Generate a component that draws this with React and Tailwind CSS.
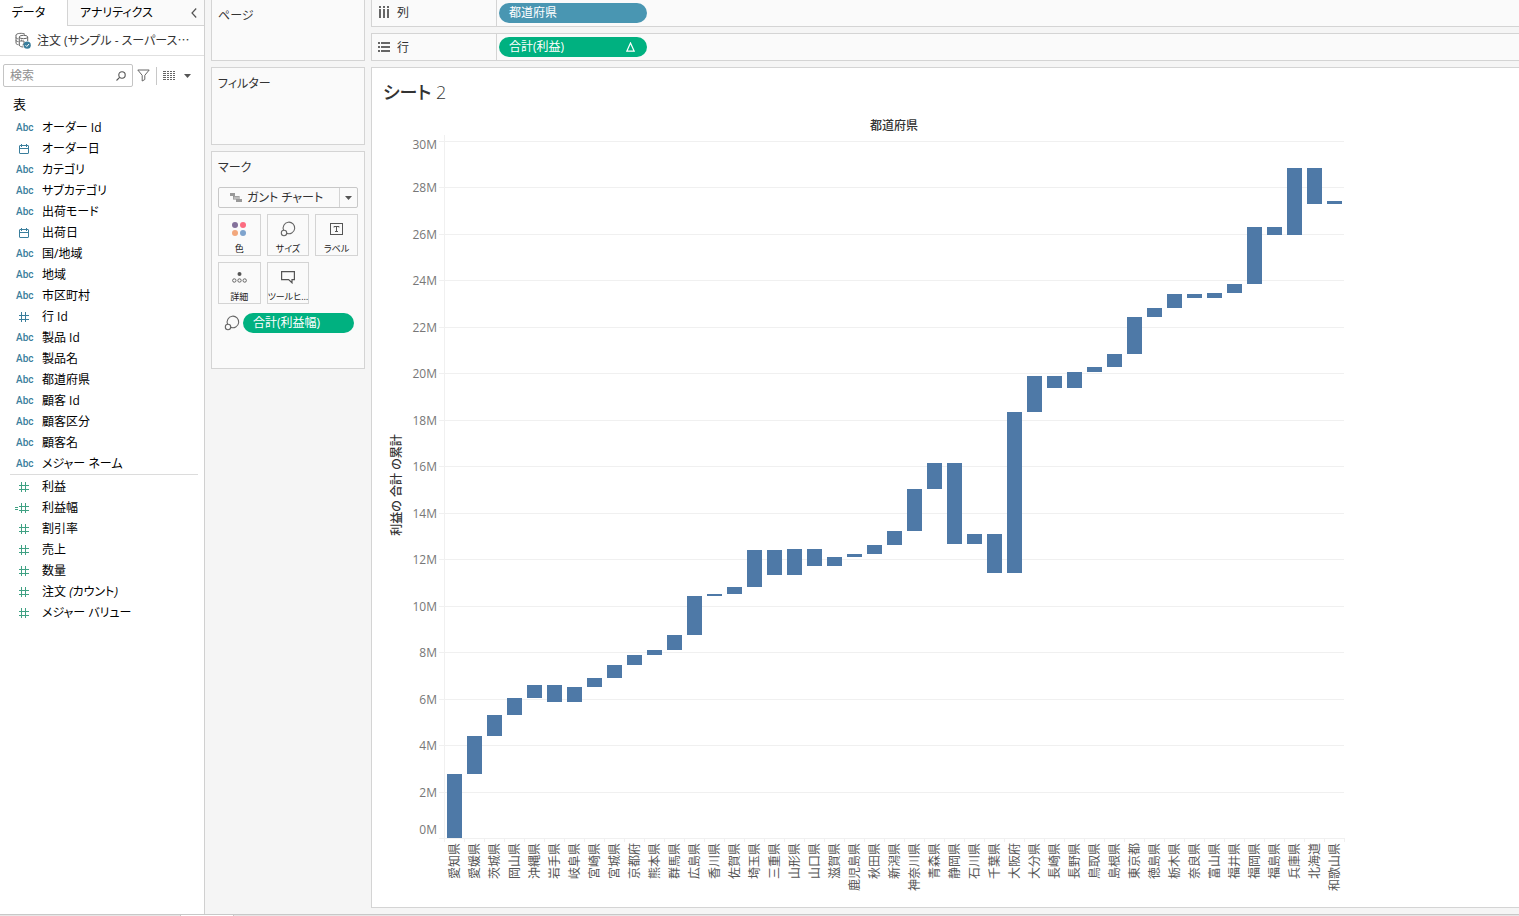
import { useState } from 'react';

const dimensions = [
  { name: 'オーダー Id', type: 'abc' },
  { name: 'オーダー日', type: 'date' },
  { name: 'カテゴリ', type: 'abc' },
  { name: 'サブカテゴリ', type: 'abc' },
  { name: '出荷モード', type: 'abc' },
  { name: '出荷日', type: 'date' },
  { name: '国/地域', type: 'abc' },
  { name: '地域', type: 'abc' },
  { name: '市区町村', type: 'abc' },
  { name: '行 Id', type: 'number' },
  { name: '製品 Id', type: 'abc' },
  { name: '製品名', type: 'abc' },
  { name: '都道府県', type: 'abc' },
  { name: '顧客 Id', type: 'abc' },
  { name: '顧客区分', type: 'abc' },
  { name: '顧客名', type: 'abc' },
  { name: 'メジャー ネーム', type: 'abc' },
];

const measures = [
  { name: '利益', type: 'number' },
  { name: '利益幅', type: 'calc' },
  { name: '割引率', type: 'number' },
  { name: '売上', type: 'number' },
  { name: '数量', type: 'number' },
  { name: '注文 (カウント)', type: 'number' },
  { name: 'メジャー バリュー', type: 'number' },
];

// running total of profit, in millions
const runningTotal = [
  ['愛知県', 2.76], ['愛媛県', 4.39], ['茨城県', 5.3], ['岡山県', 6.03], ['沖縄県', 6.59],
  ['岩手県', 5.86], ['岐阜県', 6.5], ['宮崎県', 6.89], ['宮城県', 7.45], ['京都府', 7.88],
  ['熊本県', 8.1], ['群馬県', 8.74], ['広島県', 10.42], ['香川県', 10.51], ['佐賀県', 10.81],
  ['埼玉県', 12.4], ['三重県', 11.32], ['山形県', 12.44], ['山口県', 11.71], ['滋賀県', 12.1],
  ['鹿児島県', 12.22], ['秋田県', 12.61], ['新潟県', 13.21], ['神奈川県', 15.02], ['青森県', 16.14],
  ['静岡県', 12.65], ['石川県', 13.08], ['千葉県', 11.41], ['大阪府', 18.33], ['大分県', 19.88],
  ['長崎県', 19.37], ['長野県', 20.06], ['鳥取県', 20.27], ['島根県', 20.83], ['東京都', 22.42],
  ['徳島県', 22.81], ['栃木県', 23.41], ['奈良県', 23.24], ['富山県', 23.46], ['福井県', 23.84],
  ['福岡県', 26.3], ['福島県', 25.95], ['兵庫県', 28.84], ['北海道', 27.29], ['和歌山県', 27.42],
];

const ticks = [0, 2, 4, 6, 8, 10, 12, 14, 16, 18, 20, 22, 24, 26, 28, 30];

const HashIcon = ({ color, calc }) => (
  <svg className="block shrink-0" width="18" height="12" viewBox="0 0 18 12" fill={color}>
    <path d="M6 1h1v10H6zM10 1h1v10h-1zM4 4h10v1H4zM4 8h10v1H4z" />
    {calc && <path d="M0 5h3v1H0zM0 7h3v1H0z" />}
  </svg>
);

const DateIcon = () => (
  <svg className="block shrink-0" width="18" height="12" viewBox="0 0 18 12" fill="none" stroke="#3a7e9c">
    <rect x="4.5" y="2.5" width="9" height="8" rx=".5" />
    <path d="M4.5 5.5h9M6.5 1v3M11.5 1v3" />
  </svg>
);

const SizeIcon = () => (
  <svg width="16" height="16" viewBox="0 0 16 16" fill="none" stroke="#666" strokeWidth="1.1">
    <path d="M3.6 9.3A5.8 5.8 0 1 1 6.6 12.3" />
    <circle cx="4" cy="12" r="2.7" />
  </svg>
);

const Field = ({ field, color }) => (
  <li className="flex h-[21px] items-center pl-[15px]">
    <span className="flex w-[27px] items-center">
      {field.type === 'abc' && (
        <span className="pl-px font-['Roboto','Liberation_Sans',sans-serif] text-[10px] font-medium text-[#3a7e9c]">
          Abc
        </span>
      )}
      {field.type === 'date' && <DateIcon />}
      {field.type === 'number' && <HashIcon color={color} />}
      {field.type === 'calc' && <HashIcon color={color} calc />}
    </span>
    <span className="text-black">
      {/* brackets of generated fields are slanted */}
      {field.name.split(/([()])/).map((part, i) => (
        <span key={i} className={part === '(' || part === ')' ? 'italic' : undefined}>
          {part}
        </span>
      ))}
    </span>
  </li>
);

const DataPane = () => {
  const [search, setSearch] = useState('');

  return (
    <aside className="flex w-[205px] shrink-0 flex-col border-r border-[#d0d0d0] bg-white">
      <div className="flex h-[26px] text-black">
        <button className="w-[67px] pr-[10px] text-center">データ</button>
        <div className="flex flex-1 items-center justify-between border-b border-l border-[#d4d4d4] bg-[#fafafa] pr-[7px] pl-3">
          <button>アナリティクス</button>
          <button aria-label="閉じる">
            <svg width="6" height="10" viewBox="0 0 6 10" fill="none" stroke="#555" strokeWidth="1.2">
              <path d="M5.2 0.5L1 5l4.2 4.5" />
            </svg>
          </button>
        </div>
      </div>

      {/* Data source */}
      <div className="flex h-[30px] items-center gap-[5px] border-b border-[#e0e0e0] pl-[14px] text-[#333]">
        <svg className="shrink-0" width="18" height="18" viewBox="0 0 18 18" fill="none" stroke="#666">
          <path d="M2 3.2C2 1.2 9 .6 11 2.4M2 3v8c0 1 1 1.5 2.5 1.8M2 5.5c0 .8 1 1.2 2.5 1.4M2 8.3c0 .8 1 1.2 2.5 1.4" />
          <ellipse cx="9.5" cy="5" rx="4.2" ry="1.7" />
          <path d="M5.3 5v8c0 1.3 2 1.9 4 2M13.7 5v4M6.5 9h3.5v3M6.5 9l1.5-1.2M10 12l-1.5 1" />
          <circle cx="13.2" cy="13.2" r="3.6" fill="#3a7e9c" stroke="none" />
          <path d="M11.5 13.2l1.3 1.3 2.2-2.5" stroke="#fff" />
        </svg>
        <span className="whitespace-nowrap">
          注文 (サンプル - スーパース<span className="font-['Noto_Sans_CJK_JP',sans-serif]">…</span>
        </span>
      </div>

      <div className="flex h-[39px] items-center pl-[3px]">
        <label className="flex h-[23px] w-[130px] items-center rounded-[2px] border border-[#c4c4c4] pr-[6px] pl-[6px]">
          <input
            type="text"
            aria-label="検索"
            placeholder="検索"
            className="min-w-0 flex-1 text-[12px] outline-none placeholder:text-[#8e8e8e]"
            value={search}
            onChange={(e) => setSearch(e.target.value)}
          />
          <svg width="10" height="10" viewBox="0 0 10 10" fill="none" stroke="#555" strokeWidth="1.1">
            <circle cx="6" cy="4" r="3.2" />
            <path d="M3.6 6.4L.5 9.5" />
          </svg>
        </label>
        <button className="ml-1" aria-label="フィルター">
          <svg width="13" height="13" viewBox="0 0 13 13" fill="none" stroke="#666">
            <path d="M.8 1h11.4L7.8 6.3v4.2L5.2 12V6.3z" />
          </svg>
        </button>
        <span className="ml-[6px] h-[18px] w-px bg-[#c8c8c8]" />
        <button className="ml-[6px] flex items-center gap-[9px]" aria-label="表示">
          <svg width="12" height="9" viewBox="0 0 12 9" stroke="#666" shapeRendering="crispEdges">
            <path d="M0 .5h12M0 2.5h12M0 4.5h12M0 6.5h12M0 8.5h12" strokeDasharray="3 1 2 1 2 1 2" />
          </svg>
          <svg width="7" height="4" viewBox="0 0 7 4" fill="#555">
            <path d="M0 0h7L3.5 4z" />
          </svg>
        </button>
      </div>

      <h2 className="flex h-[22px] items-start pl-[13px] text-[13px] text-black">表</h2>
      <ul>
        {dimensions.map((field) => (
          <Field key={field.name} field={field} color="#3a7e9c" />
        ))}
      </ul>
      <ul className="mr-[6px] before:mb-px before:ml-[10px] before:block before:h-px before:bg-[#dcdcdc]">
        {measures.map((field) => (
          <Field key={field.name} field={field} color="#3fa183" />
        ))}
      </ul>
    </aside>
  );
};

const MarkButton = ({ label, children }) => (
  <button className="flex h-[42px] flex-col items-center justify-between border border-[#d4d4d4] pt-[6px]">
    <span className="flex h-4 items-center">{children}</span>
    <span className="text-[9px] leading-[12px] whitespace-nowrap text-[#222]">{label}</span>
  </button>
);

const Cards = () => {
  const [mark, setMark] = useState('gantt');

  return (
    <div className="flex w-[154px] shrink-0 flex-col gap-[6px]">
      <section className="h-[61px] border border-t-0 border-[#d4d4d4] bg-[#fafafa] px-[6px] pt-[7px]">
        <h2>ページ</h2>
      </section>
      <section className="h-[78px] border border-[#d4d4d4] bg-[#fafafa] px-[6px] pt-[7px]">
        <h2>フィルター</h2>
      </section>
      <section className="h-[218px] border border-[#d4d4d4] bg-[#fafafa] px-[6px] pt-[7px]">
        <h2>マーク</h2>
        <div className="relative mt-[10px] flex h-[21px] rounded-[2px] border border-[#c8c8c8]">
          <svg className="absolute top-1 left-[11px]" width="13" height="11" viewBox="0 0 13 11" shapeRendering="crispEdges">
            <path d="M0 1h5v3H0z" fill="#999" />
            <path d="M3 4h6v3H3z" fill="#bbb" stroke="#888" strokeWidth=".5" />
            <path d="M6 7h6v3H6z" fill="#999" />
          </svg>
          <select
            aria-label="マークの種類"
            className="h-full w-full appearance-none pl-7 text-[12px] outline-none"
            value={mark}
            onChange={(e) => setMark(e.target.value)}
          >
            <option value="gantt">ガント チャート</option>
            <option value="bar">棒</option>
          </select>
          <span className="pointer-events-none absolute inset-y-0 right-0 flex w-[18px] items-center justify-center border-l border-[#d4d4d4]">
            <svg width="7" height="4" viewBox="0 0 7 4" fill="#555">
              <path d="M0 0h7L3.5 4z" />
            </svg>
          </span>
        </div>

        <div className="mt-[6px] grid grid-cols-3 gap-[6px]">
          <MarkButton label="色">
            <svg width="16" height="16" viewBox="0 0 16 16">
              <circle cx="4" cy="4" r="3" fill="#84719b" />
              <circle cx="12" cy="4" r="3" fill="#fc6c80" />
              <circle cx="4" cy="12" r="3" fill="#f2a77c" />
              <circle cx="12" cy="12" r="3" fill="#7ea3cd" />
            </svg>
          </MarkButton>
          <MarkButton label="サイズ">
            <SizeIcon />
          </MarkButton>
          <MarkButton label="ラベル">
            <svg width="13" height="12" viewBox="0 0 13 12" fill="none" stroke="#555">
              <rect x=".5" y=".5" width="12" height="11" />
              <path d="M4 4.5v-1h5v1M6.5 3.5v5M5 8.5h3" />
            </svg>
          </MarkButton>
          <MarkButton label="詳細">
            <svg width="15" height="12" viewBox="0 0 15 12" fill="none" stroke="#666">
              <circle cx="7.5" cy="3" r="2" fill="#555" stroke="none" />
              <circle cx="2.3" cy="9.5" r="1.7" />
              <circle cx="7.5" cy="9.5" r="1.7" />
              <circle cx="12.7" cy="9.5" r="1.7" />
            </svg>
          </MarkButton>
          <MarkButton label="ツールヒ…">
            <svg width="14" height="14" viewBox="0 0 14 14" fill="none" stroke="#555" strokeWidth="1.2">
              <path d="M.6 1.6h12.8v8H11v3.2L7.6 9.6h-7z" />
            </svg>
          </MarkButton>
        </div>

        <div className="mt-[9px] flex items-center gap-[3px] pr-1 pl-[6px]">
          <SizeIcon />
          <button className="h-5 flex-1 rounded-full bg-[#00b180] pl-[10px] text-left text-white">
            合計(利益幅)
          </button>
        </div>
      </section>
    </div>
  );
};

const Shelf = ({ icon, label, first, children }) => (
  <div
    className={`flex h-[28px] items-stretch border-b border-l border-[#d4d4d4] bg-[#fafafa] ${first ? '-mt-px' : 'border-t'}`}
  >
    <div className="flex w-[125px] items-center gap-[6px] border-r border-[#d4d4d4] pl-[6px]">
      {icon}
      <span className="pt-px">{label}</span>
    </div>
    <div className="flex items-center pl-[2px]">{children}</div>
  </div>
);

const GanttChart = () => {
  const left = 64;
  const base = 723;
  const step = 20;
  const right = left + runningTotal.length * step;
  const y = (value) => Math.round(base - value * 23.235);

  return (
    <svg width="970" height="785" className="block" role="img" aria-label="利益の合計の累計">
      <text x="514" y="15" textAnchor="middle" className="fill-[#333] text-[12px] font-medium">都道府県</text>
      <text transform="translate(21 370) rotate(-90)" textAnchor="middle" className="fill-[#333] text-[12px] font-medium">
        利益の 合計 の累計
      </text>

      <g shapeRendering="crispEdges" stroke="#f0f0f0">
        {ticks.map((tick) => (
          <line key={tick} x1={left - 5} x2={right} y1={y(tick) + 0.5} y2={y(tick) + 0.5} />
        ))}
        <line x1={left + 0.5} x2={left + 0.5} y1="20" y2={base + 4} />
        {runningTotal.map(([name], i) => (
          <line key={name} x1={left + (i + 1) * step + 0.5} x2={left + (i + 1) * step + 0.5} y1={base} y2={base + 4} />
        ))}
      </g>

      {ticks.map((tick) => {
        // keep the end labels inside the plot
        let labelY = y(tick) + 5;
        if (tick === 0) labelY = base - 4;
        if (tick === 30) labelY = y(tick) + 8;
        return (
          <text
            key={tick}
            x={left - 7}
            y={labelY}
            textAnchor="end"
            className="fill-[#777] font-['Open_Sans',sans-serif] text-[12px]"
          >
            {tick}M
          </text>
        );
      })}

      {runningTotal.map(([name, value], i) => {
        const from = y(i === 0 ? 0 : runningTotal[i - 1][1]);
        const to = y(value);
        const x = left + i * step;
        return (
          <g key={name}>
            <rect x={x + 3} y={Math.min(from, to)} width="15" height={Math.abs(from - to)} fill="#4e79a7" />
            <text
              transform={`translate(${x + 15} ${base + 5}) rotate(-90)`}
              textAnchor="end"
              className="fill-[#555] text-[12px]"
            >
              {name}
            </text>
          </g>
        );
      })}
    </svg>
  );
};

const App = () => {
  return (
    <div className="flex min-h-screen flex-col bg-[#f5f5f5] font-['Open_Sans','Noto_Sans_CJK_JP',sans-serif] text-[12px] leading-[18px] text-[#333] [font-feature-settings:'palt']">
      <div className="flex flex-1">
        <DataPane />
        <div className="flex min-w-0 flex-1 gap-[6px] pl-[6px]">
          <Cards />
          <main className="flex min-w-0 flex-1 flex-col gap-[6px] pb-[6px]">
            <Shelf
              first
              label="列"
              icon={
                <svg width="13" height="13" viewBox="0 0 13 13" fill="#666" shapeRendering="crispEdges">
                  <path d="M1 0h2v2H1zM5 0h2v2H5zM9 0h2v2H9zM1 3h2v9H1zM5 3h2v9H5zM9 3h2v9H9z" />
                </svg>
              }
            >
              <button className="h-5 w-[148px] rounded-full bg-[#4996b2] pl-[10px] text-left text-white">都道府県</button>
            </Shelf>
            <Shelf
              label="行"
              icon={
                <svg width="13" height="13" viewBox="0 0 13 13" fill="#666" shapeRendering="crispEdges">
                  <path d="M0 1h2v2H0zM0 5h2v2H0zM0 9h2v2H0zM3 1h9v2H3zM3 5h9v2H3zM3 9h9v2H3z" />
                </svg>
              }
            >
              <button className="flex h-5 w-[148px] items-center justify-between rounded-full bg-[#00b180] pr-3 pl-[10px] text-white">
                合計(利益)
                <svg width="9" height="10" viewBox="0 0 9 10" fill="none" stroke="#fff" strokeWidth="1.2">
                  <path d="M4.5 1L8.2 9.2H.8z" />
                </svg>
              </button>
            </Shelf>

            <section className="flex-1 border border-r-0 border-[#d4d4d4] bg-white pt-[10px] pl-2">
              <h1 className="pl-[3px] text-[18px] leading-7">
                <span className="font-medium">シート</span> <span className="font-light">2</span>
              </h1>
              <div className="mt-[9px]">
                <GanttChart />
              </div>
            </section>
          </main>
        </div>
      </div>

      {/* Sheet tabs */}
      <footer className="flex h-[2px] border-t border-[#c8c8c8] bg-[#e6e6e6]">
        <span className="ml-[180px] w-[54px] border-x border-[#c8c8c8] bg-white" />
      </footer>
    </div>
  );
};

export default App;
